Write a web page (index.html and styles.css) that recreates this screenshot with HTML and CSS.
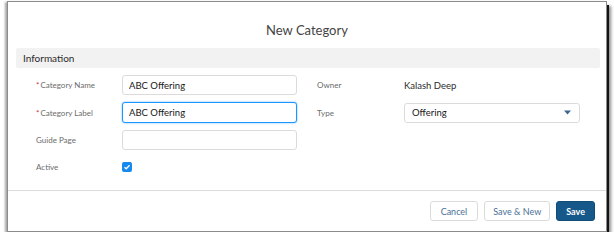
FILE: index.html
```html
<!DOCTYPE html>
<html lang="en">
<head>
  <meta charset="UTF-8">
  <meta name="viewport" content="width=device-width, initial-scale=1.0">
  <title>New Category</title>
  <link rel="stylesheet" href="styles.css">
</head>
<body>
  <div class="modal">
    <div class="modal-header">
      <h2>New Category</h2>
    </div>

    <div class="modal-body">
      <div class="section-title">Information</div>

      <div class="form">
        <!-- row 1 -->
        <label class="field-label"><span class="required">*</span>Category Name</label>
        <input class="input" type="text" value="ABC Offering">
        <span class="field-label col2">Owner</span>
        <span class="field-value">Kalash Deep</span>

        <!-- row 2 -->
        <label class="field-label"><span class="required">*</span>Category Label</label>
        <input class="input focused" type="text" value="ABC Offering">
        <span class="field-label col2">Type</span>
        <div class="select">
          <span>Offering</span>
          <svg class="select-arrow" width="7" height="5" viewBox="0 0 7 5">
            <path d="M0 0.5 H7 L3.5 4.5 Z" fill="#3b6690"/>
          </svg>
        </div>

        <!-- row 3 -->
        <label class="field-label">Guide Page</label>
        <input class="input" type="text" value="">
        <span></span>
        <span></span>

        <!-- row 4 -->
        <label class="field-label">Active</label>
        <div class="checkbox-cell">
          <span class="checkbox">
            <svg width="8" height="8" viewBox="0 0 8 8">
              <path d="M1.5 4.2 L3.2 5.8 L6.6 2.2" fill="none" stroke="#fff" stroke-width="1.3"/>
            </svg>
          </span>
        </div>
        <span></span>
        <span></span>
      </div>
    </div>

    <div class="modal-footer">
      <button class="btn">Cancel</button>
      <button class="btn btn-wide">Save &amp; New</button>
      <button class="btn btn-brand">Save</button>
    </div>
  </div>
</body>
</html>
```

FILE: styles.css
```css
body {
  margin: 0;
  padding: 0;
  background-color: #fff;
  font-family: Lato, "Open Sans", Arial, sans-serif;
  color: #3e3e3c;
}

.modal {
  box-sizing: border-box;
  margin: 1px 0 0 7px;
  width: 600px;
  height: 231px;
  background: #fff;
  border: 1px solid #8c8c8c;
  box-shadow: 2px 4px 0 #141414, 4px 5px 3px rgba(0, 0, 0, 0.45), -2px 1px 2px rgba(0, 0, 0, 0.35);
  display: flex;
  flex-direction: column;
}

.modal-header {
  height: 46px;
  box-sizing: border-box;
  padding-top: 18px;
  text-align: center;
}

.modal-header h2 {
  margin: 0;
  font-size: 13px;
  font-weight: 400;
  line-height: 20px;
  color: #444;
}

.modal-body {
  flex: 1;
  padding: 0 6px 0 8px;
}

.section-title {
  height: 20px;
  line-height: 20px;
  background: #f3f2f2;
  border-radius: 2px;
  padding-left: 7px;
  font-size: 10px;
  color: #2b2b2b;
}

.form {
  display: grid;
  grid-template-columns: 86px 175px 107px 176px;
  grid-template-rows: 20px 21px 20px 20px;
  row-gap: 7px;
  margin-top: 7px;
  padding-left: 20px;
  align-items: center;
}

.field-label {
  font-size: 8px;
  color: #6b6b6b;
}

.field-label.col2 {
  padding-left: 20px;
}

.required {
  color: #c23934;
  margin-right: 1px;
}

.field-value {
  font-size: 9.5px;
  color: #2b2b2b;
}

.input {
  box-sizing: border-box;
  height: 20px;
  width: 175px;
  margin: 0;
  padding: 0 6px;
  border: 1px solid #dddbda;
  border-radius: 3px;
  font-family: inherit;
  font-size: 9.5px;
  color: #181818;
  outline: none;
}

.input.focused {
  height: 21px;
  border-color: #1b96ff;
  box-shadow: 0 0 2px #5eb4ff;
}

.select {
  box-sizing: border-box;
  height: 20px;
  width: 176px;
  padding: 0 8px 0 7px;
  border: 1px solid #dddbda;
  border-radius: 3px;
  font-size: 9.5px;
  color: #181818;
  display: flex;
  align-items: center;
  justify-content: space-between;
}

.checkbox-cell {
  display: flex;
  align-items: center;
}

.checkbox {
  width: 10px;
  height: 10px;
  border-radius: 2px;
  background: #1589ee;
  display: flex;
  align-items: center;
  justify-content: center;
}

.modal-footer {
  border-top: 1px solid #dddbda;
  height: 41px;
  box-sizing: border-box;
  padding: 10px 11px 0 0;
  display: flex;
  justify-content: flex-end;
  gap: 6px;
}

.btn {
  height: 20px;
  padding: 0 10px;
  background: #fff;
  border: 1px solid #dddbda;
  border-radius: 3px;
  font-family: inherit;
  font-size: 9px;
  color: #4a6f96;
  cursor: pointer;
}

.btn-wide {
  padding: 0 8px;
}

.btn-brand {
  background: #16588a;
  border-color: #0f4c7a;
  color: #fff;
  font-weight: 700;
  padding: 0 9px;
}
```
